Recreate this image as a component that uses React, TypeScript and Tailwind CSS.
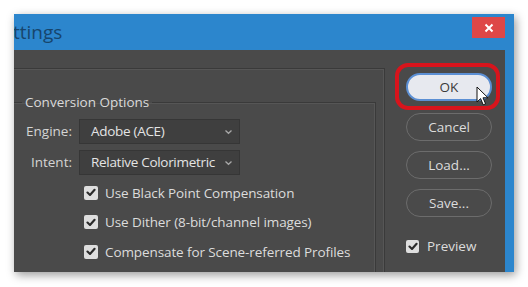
import React from "react";

const font = { fontFamily: '"Open Sans", "Noto Sans", sans-serif' };

function Check({ size = 14 }: { size?: number }) {
  return (
    <div
      className="bg-[#dedede] rounded-[2px] flex items-center justify-center shrink-0"
      style={{ width: size, height: size }}
    >
      <svg width="10" height="9" viewBox="0 0 10 9">
        <path d="M1.5 4.6 L4 7 L8.6 1.8" fill="none" stroke="#2a2a2a" strokeWidth="2.1" strokeLinecap="round" strokeLinejoin="round" />
      </svg>
    </div>
  );
}

function Chevron() {
  return (
    <svg width="9" height="6" viewBox="0 0 9 6" className="shrink-0">
      <path d="M1.5 1.5 L4.5 4.3 L7.5 1.5" fill="none" stroke="#a8a8a8" strokeWidth="1.3" />
    </svg>
  );
}

function Select({ value }: { value: string }) {
  return (
    <div className="w-[161px] h-[25px] bg-[#3f3f3f] border border-[#363636] flex items-center pl-[11px] pr-[6px] justify-between">
      <span className="text-[13.5px] tracking-[-0.3px] text-[#e4e4e4] leading-none whitespace-nowrap">{value}</span>
      <Chevron />
    </div>
  );
}

function Btn({ label }: { label: string }) {
  return (
    <div className="w-[86px] h-[28px] rounded-full border-[1.5px] border-[#6c6c6c] flex items-center justify-center text-[13.5px] text-[#dcdcdc]">
      {label}
    </div>
  );
}

export default function App() {
  return (
    <div className="w-[528px] h-[287px] bg-white overflow-hidden pt-[14px] pl-[14px]" style={font}>
      <div className="w-[500px] h-[258px] flex flex-col shadow-[2px_3px_9px_rgba(0,0,0,0.4)] overflow-hidden">
        {/* title bar */}
        <div className="h-[36px] bg-[#2c86cd] flex justify-between shrink-0">
          <span className="text-[19px] text-[#17456c] leading-none mt-[9px] ml-[-1px]">ttings</span>
          <div className="w-[33px] h-[21px] bg-[#de4747] mt-[3px] mr-[9px] flex items-center justify-center">
            <svg width="10" height="10" viewBox="0 0 10 10">
              <path d="M1.5 1.5 L8.5 8.5 M8.5 1.5 L1.5 8.5" stroke="#fff" strokeWidth="2" />
            </svg>
          </div>
        </div>
        {/* body */}
        <div className="flex-1 flex min-h-0">
          <div className="flex-1 bg-[#4a4a4a] flex flex-col min-h-0">
            <div className="h-[18px] shrink-0" />
            <div className="flex-1 flex min-h-0">
              {/* left panel */}
              <div className="w-[371px] border-t border-r border-[#3a3a3a] shadow-[inset_-1px_1px_0_#565656] pt-[24px] shrink-0">
                <fieldset className="w-[362px] h-[200px] border-t border-r border-[#3a3a3a] shadow-[inset_-1px_1px_0_#565656]">
                  <legend className="ml-[8px] px-[3px] text-[13.5px] leading-[19px] text-[#dadada]">Conversion Options</legend>
                  <div className="pt-[7px] flex flex-col gap-[6px]">
                    <div className="flex items-center">
                      <span className="w-[58px] text-right text-[13.5px] text-[#d4d4d4]">Engine:</span>
                      <div className="ml-[7px]">
                        <Select value="Adobe (ACE)" />
                      </div>
                    </div>
                    <div className="flex items-center">
                      <span className="w-[58px] text-right text-[13.5px] text-[#d4d4d4]">Intent:</span>
                      <div className="ml-[7px]">
                        <Select value="Relative Colorimetric" />
                      </div>
                    </div>
                  </div>
                  <div className="flex flex-col mt-[3px] ml-[70px]">
                    {[
                      "Use Black Point Compensation",
                      "Use Dither (8-bit/channel images)",
                      "Compensate for Scene-referred Profiles",
                    ].map((t) => (
                      <div key={t} className="h-[29.5px] flex items-center gap-[7px]">
                        <Check />
                        <span className="text-[13.5px] tracking-[-0.1px] text-[#dcdcdc] whitespace-nowrap">{t}</span>
                      </div>
                    ))}
                  </div>
                </fieldset>
              </div>
              {/* right column */}
              <div className="flex flex-col pl-[21px] pt-[5px]">
                <div className="relative w-[86px] h-[28px]">
                  <div className="w-[86px] h-[28px] rounded-full bg-[#e7e9ef] border-[2px] border-[#5b8fd4] flex items-center justify-center text-[13.5px] text-[#3a3a3a]">
                    OK
                  </div>
                  <div className="absolute -left-[11px] -right-[8px] -top-[10px] -bottom-[9px] border-[4px] border-[#d8141c] rounded-[13px]" />
                  <svg className="absolute left-[70px] top-[13px]" width="14" height="21" viewBox="0 0 14 21">
                    <path d="M1 1 L1 16 L4.6 12.6 L7.2 18.8 L9.6 17.8 L7 11.8 L12 11.8 Z" fill="#fff" stroke="#111" strokeWidth="1" strokeLinejoin="round" />
                  </svg>
                </div>
                <div className="mt-[12px] flex flex-col gap-[10px]">
                  <Btn label="Cancel" />
                  <Btn label="Load..." />
                  <Btn label="Save..." />
                </div>
                <div className="mt-[19px] flex items-center gap-[8px]">
                  <Check size={13} />
                  <span className="text-[13.5px] text-[#dcdcdc]">Preview</span>
                </div>
              </div>
            </div>
          </div>
          <div className="w-[9px] bg-[#2c86cd] shrink-0" />
        </div>
      </div>
    </div>
  );
}
